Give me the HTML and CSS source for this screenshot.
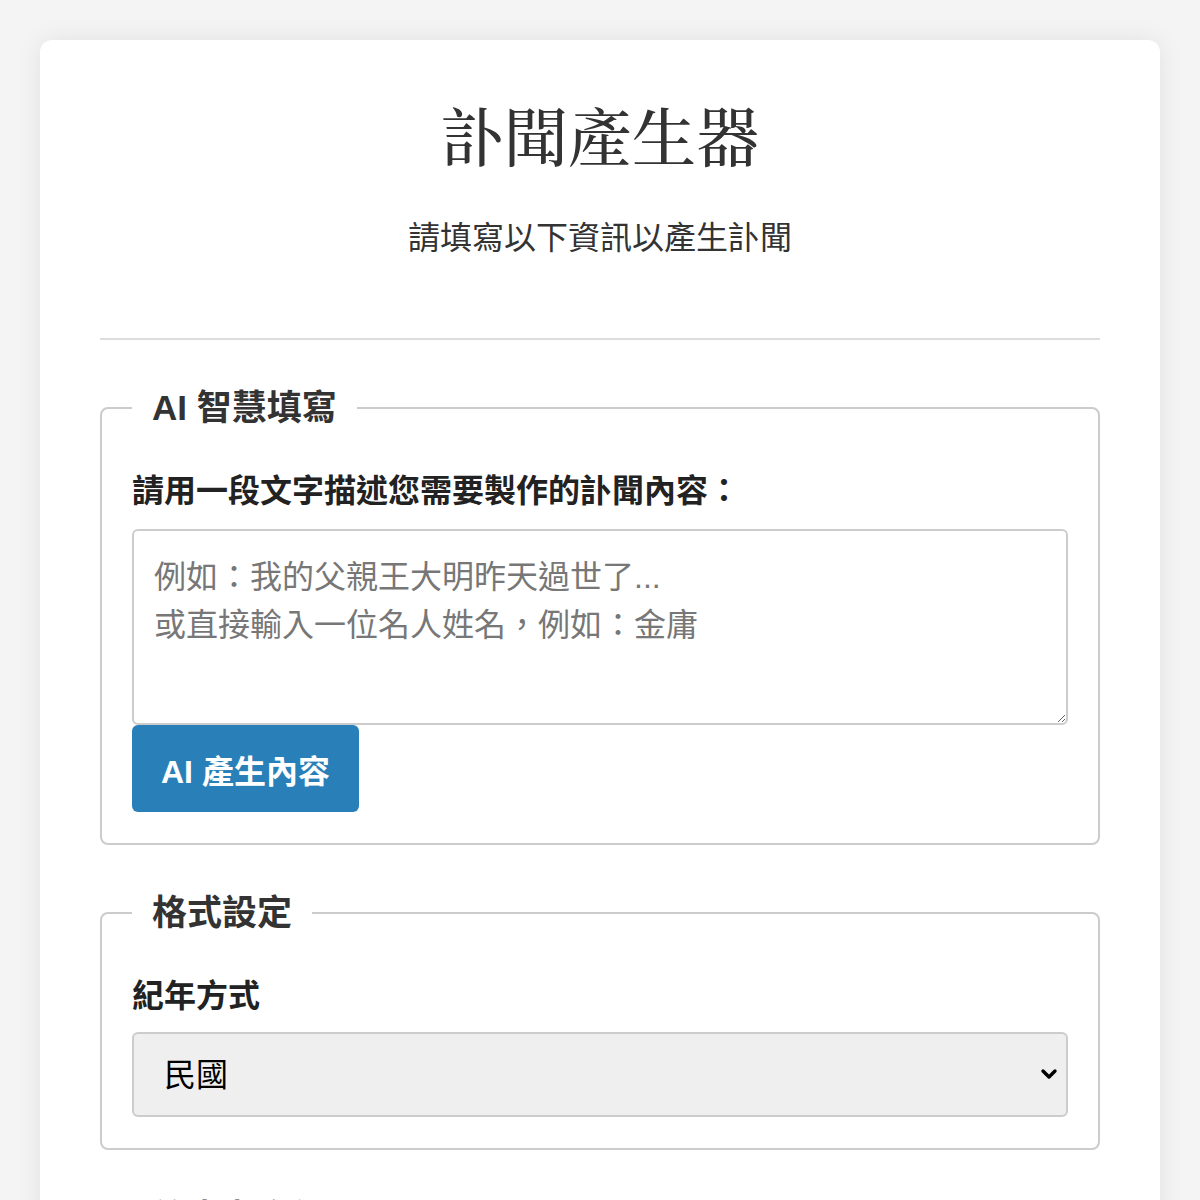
FILE: index.html
```html
<!DOCTYPE html>
<html lang="zh-Hant">
<head>
    <meta charset="UTF-8">
    <meta name="viewport" content="width=device-width, initial-scale=1.0">
    <title>訃聞產生器</title>
    <link rel="stylesheet" href="styles.css">
</head>
<body>
    <div class="container">
        <h1>訃聞產生器</h1>
        <p class="subtitle">請填寫以下資訊以產生訃聞</p>

        <hr>

        <fieldset class="section">
            <legend>AI 智慧填寫</legend>
            <label for="ai-prompt">請用一段文字描述您需要製作的訃聞內容：</label>
            <textarea id="ai-prompt" placeholder="例如：我的父親王大明昨天過世了...&#10;或直接輸入一位名人姓名，例如：金庸"></textarea>
            <button type="button" class="btn-ai" id="btn-ai">AI 產生內容</button>
        </fieldset>

        <fieldset class="section">
            <legend>格式設定</legend>
            <label for="calendar">紀年方式</label>
            <div class="select-wrap">
                <select id="calendar">
                    <option value="roc">民國</option>
                    <option value="ad">西元</option>
                </select>
                <!-- flecha del select -->
                <svg class="select-arrow" width="18" height="12" viewBox="0 0 18 12">
                    <path d="M3 3 L9 9 L15 3" fill="none" stroke="#000" stroke-width="3.4" stroke-linecap="round" stroke-linejoin="round"/>
                </svg>
            </div>
        </fieldset>

        <fieldset class="section">
            <legend>往生者資訊</legend>
            <label for="name">姓名</label>
            <input type="text" id="name">
        </fieldset>
    </div>
</body>
</html>
```

FILE: styles.css
```css
body {
    font-family: "Liberation Sans", "Noto Sans CJK TC", sans-serif;
    margin: 0;
    padding: 40px;
    background-color: #f4f4f4;
    color: #333;
}

.container {
    background-color: white;
    border-radius: 12px;
    box-shadow: 0 0 24px rgba(0, 0, 0, 0.08);
    padding: 60px;
}

h1 {
    font-family: "Noto Serif CJK TC", "Noto Serif CJK SC", "Liberation Serif", "Noto Sans CJK TC", serif;
    font-size: 64px;
    font-weight: 500;
    line-height: 66px;
    text-align: center;
    margin: 0 0 46px;
}

.subtitle {
    font-size: 32px;
    line-height: 52px;
    text-align: center;
    margin: 0;
}

hr {
    border: none;
    border-top: 2px solid #ddd;
    margin: 74px 0 44px;
}

.section {
    border: 2px solid #ccc;
    border-radius: 8px;
    padding: 35px 30px 31px;
    margin: 0 0 44px;
}

.section legend {
    font-size: 35px;
    font-weight: bold;
    line-height: 48px;
    padding: 0 20px;
    color: #333;
}

.section label {
    display: block;
    font-size: 32px;
    font-weight: bold;
    line-height: 48px;
    margin-bottom: 14px;
    color: #222;
}

.section textarea {
    display: block;
    box-sizing: border-box;
    width: 100%;
    height: 196px;
    padding: 22px 20px;
    border: 2px solid #ccc;
    border-radius: 6px;
    font-family: "Liberation Sans", "Noto Sans CJK TC", sans-serif;
    font-size: 32px;
    line-height: 48px;
    resize: vertical;
    margin: 0;
}

.section textarea::placeholder {
    color: #777;
}

.btn-ai {
    display: block;
    background-color: #2980b9;
    color: white;
    border: none;
    border-radius: 6px;
    padding: 0 29px;
    height: 87px;
    font-family: "Liberation Sans", "Noto Sans CJK TC", sans-serif;
    font-size: 32px;
    font-weight: bold;
    cursor: pointer;
}

.btn-ai:hover {
    background-color: #2471a3;
}

.select-wrap {
    position: relative;
    margin-top: -2px;
}

.section select,
.section input[type="text"] {
    display: block;
    box-sizing: border-box;
    width: 100%;
    height: 85px;
    padding: 0 30px;
    border: 2px solid #ccc;
    border-radius: 6px;
    background-color: #efefef;
    font-family: "Liberation Sans", "Noto Sans CJK TC", sans-serif;
    font-size: 32px;
    color: #000;
}

.section select {
    appearance: none;
    -webkit-appearance: none;
}

.select-arrow {
    position: absolute;
    right: 10px;
    top: 36px;
    pointer-events: none;
}
```
